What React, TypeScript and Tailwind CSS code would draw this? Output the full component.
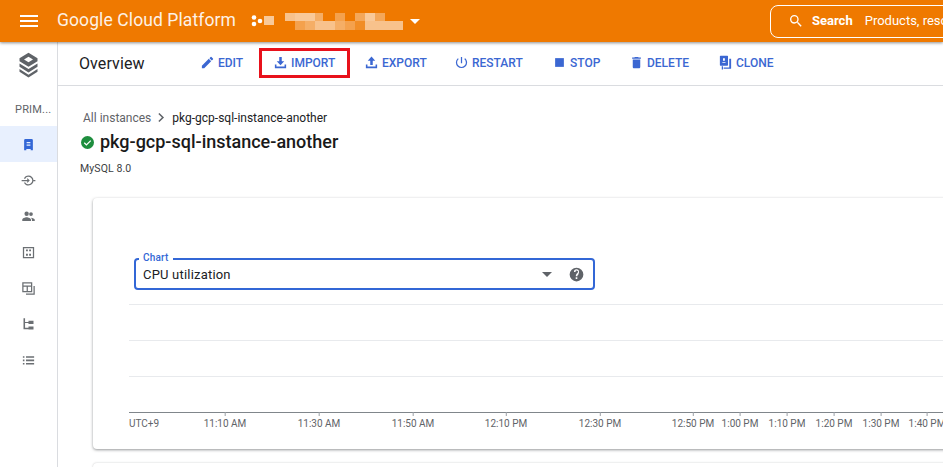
import type { ReactNode } from 'react';

const roboto = "font-['Roboto','Liberation_Sans',sans-serif]";

const Icon = ({ d, className = '' }: { d: string; className?: string }) => (
  <svg viewBox="0 0 24 24" className={className} fill="currentColor">
    <path d={d} />
  </svg>
);

const actions: { label: string; d: string; textWidth: string; gap: string; highlighted?: boolean }[] = [
  { label: 'EDIT', textWidth: 'w-[25px]', gap: 'mr-[16px]', d: 'M3 17.25V21h3.75L17.81 9.94l-3.75-3.75L3 17.25zM20.71 7.04a1 1 0 0 0 0-1.41l-2.34-2.34a1 1 0 0 0-1.41 0l-1.83 1.83 3.75 3.75 1.83-1.83z' },
  { label: 'IMPORT', textWidth: 'w-[44px]', gap: 'mr-[14px]', highlighted: true, d: 'M10 3h4v7h4l-6 6.5L6 10h4V3zM3 15h2.5v3.5h13V15H21v6H3v-6z' },
  { label: 'EXPORT', textWidth: 'w-[45px]', gap: 'mr-[27px]', d: 'M12 2.5l6 6.5h-4v7h-4V9H6l6-6.5zM3 15h2.5v3.5h13V15H21v6H3v-6z' },
  { label: 'RESTART', textWidth: 'w-[50px]', gap: 'mr-[30px]', d: 'M13 3h-2v10h2V3zm4.83 2.17l-1.42 1.42A6.92 6.92 0 0 1 19 12a7 7 0 0 1-14 0c0-2.19 1-4.14 2.58-5.42L6.17 5.17A8.93 8.93 0 0 0 3 12a9 9 0 0 0 18 0c0-2.74-1.23-5.18-3.17-6.83z' },
  { label: 'STOP', textWidth: 'w-[31px]', gap: 'mr-[28px]', d: 'M5 5h14v14H5z' },
  { label: 'DELETE', textWidth: 'w-[43px]', gap: 'mr-[28px]', d: 'M6 19c0 1.1.9 2 2 2h8c1.1 0 2-.9 2-2V7H6v12zM19 4h-3.5l-1-1h-5l-1 1H5v2h14V4z' },
  { label: 'CLONE', textWidth: 'w-[37px]', gap: '', d: 'M4 1h11a1 1 0 0 1 1 1v14a1 1 0 0 1-1 1H4a1 1 0 0 1-1-1V2a1 1 0 0 1 1-1zm4 4v4h3V5H8zm-1 6v1.5h5V11H7zm11-5h3v15a1 1 0 0 1-1 1H9v-2h9V6zM6 18h2v5H6v-5z' },
];

const sideIcons = [
  'M7 3h10a2 2 0 0 1 2 2v16h-3.5v-2h-7v2H5V5a2 2 0 0 1 2-2zm2 5v2h6V8H9zm0 4v2h6v-2H9z',
  'M12 4a8 8 0 0 1 0 16 8 8 0 0 1-7.4-5h2.2A6 6 0 1 0 6.8 9H4.6A8 8 0 0 1 12 4zM1 11h9V8l4 4-4 4v-3H1v-2zm19 0h3v2h-3v-2z',
  'M9 11a3.5 3.5 0 1 0 0-7 3.5 3.5 0 0 0 0 7zm7 0a3 3 0 1 0 0-6 3 3 0 0 0 0 6zM2 19v-2c0-2.2 4.5-4 7-4s7 1.8 7 4v2H2zm15.5 0v-2c0-1.3-.7-2.4-1.7-3.2 2.8.2 6.2 1.5 6.2 3.2v2h-4.5z',
  'M3 3h18v18H3V3zm2 2v14h14V5H5zm3 2h3v3H8V7zm5 0h3v3h-3V7zM8 14h3v3H8v-3zm5 0h3v3h-3v-3z',
  'M2 2h16v16H2V2zm2 2v3h12V4H4zm0 5v7h5V9H4zm7 0v7h5V9h-5zm9-1h2v14H8v-2h12V8z',
  'M4 2h2.5v3.5H4V2zm0 3h2.5v12H12v2.5H4V5zm2 3h6v1.5H6V8zm6-2h8v5h-8V6zm0 9h8v5h-8v-5z',
  'M3 5h2.5v2.5H3V5zm5 0h13v2.5H8V5zm-5 5.5h2.5V13H3v-2.5zm5 0h13V13H8v-2.5zM3 16h2.5v2.5H3V16zm5 0h13v2.5H8V16z',
];

const ticks = [
  { x: 96, label: '11:10 AM' },
  { x: 190, label: '11:30 AM' },
  { x: 284, label: '11:50 AM' },
  { x: 377, label: '12:10 PM' },
  { x: 471, label: '12:30 PM' },
  { x: 564, label: '12:50 PM' },
  { x: 611, label: '1:00 PM' },
  { x: 658, label: '1:10 PM' },
  { x: 705, label: '1:20 PM' },
  { x: 752, label: '1:30 PM' },
  { x: 798, label: '1:40 PM' },
];

// blurred-out project name in the header
const mosaic: [number, number, number, number, number][] = [
  [0, 0, 10, 8, 0.55], [10, 0, 20, 8, 0.6], [30, 0, 8, 8, 0.4], [50, 0, 10, 8, 0.3], [70, 0, 10, 8, 0.35], [80, 0, 10, 8, 0.6], [90, 0, 10, 8, 0.35],
  [10, 8, 10, 9, 0.3], [20, 8, 10, 9, 0.4], [30, 8, 20, 9, 0.55], [50, 8, 10, 9, 0.4], [60, 8, 10, 9, 0.3], [80, 8, 38, 9, 0.55], [70, 8, 10, 9, 0.15],
];

const Bar = ({ children }: { children: ReactNode }) => (
  <div className="relative z-10 flex h-[42px] shrink-0 items-center bg-[#ef7900] text-white shadow-[0_1px_3px_rgba(0,0,0,0.45)]">
    {children}
  </div>
);

export default function App() {
  return (
    <div className={`${roboto} flex h-[467px] w-[943px] flex-col overflow-hidden bg-white text-[#202124]`}>
      <Bar>
        <Icon d="M3 18h18v-2H3v2zm0-5h18v-2H3v2zm0-7v2h18V6H3z" className="ml-[17px] h-[24px] w-[24px] shrink-0" />
        <span className="ml-[16px] w-[173px] shrink-0 text-[17.5px] leading-none tracking-[0.1px] whitespace-nowrap opacity-90">Google Cloud Platform</span>
        <svg viewBox="0 0 24 12" className="ml-[21px] h-[12px] w-[24px] shrink-0" fill="#fff">
          <circle cx="3" cy="2.5" r="2.3" />
          <circle cx="3" cy="9" r="2.3" />
          <circle cx="9" cy="6" r="2.3" />
          <rect x="13" y="1" width="10" height="9" opacity="0.6" />
        </svg>
        <svg viewBox="0 0 118 17" className="ml-[10px] h-[17px] w-[118px] shrink-0" fill="#fff">
          {mosaic.map(([x, y, w, h, o]) => (
            <rect key={`${x}-${y}`} x={x} y={y} width={w} height={h} opacity={o} />
          ))}
        </svg>
        <span className="ml-[7px] h-0 w-0 shrink-0 border-x-[5px] border-t-[5px] border-x-transparent border-t-white" />
        <div className="ml-[350px] flex h-[33px] w-[300px] shrink-0 items-center rounded-lg border border-white pl-[17px] text-[13px] whitespace-nowrap">
          <Icon d="M15.5 14h-.79l-.28-.27A6.47 6.47 0 0 0 16 9.5 6.5 6.5 0 1 0 9.5 16c1.61 0 3.09-.59 4.23-1.57l.27.28v.79l5 4.99L20.49 19l-4.99-5zm-6 0a4.5 4.5 0 1 1 0-9 4.5 4.5 0 0 1 0 9z" className="h-[16px] w-[16px] shrink-0" />
          <span className="ml-[8px] font-bold">Search</span>
          <span className="ml-[12px]">Products, resources, docs</span>
        </div>
      </Bar>

      <div className="flex min-h-0 flex-1">
        <aside className="flex w-[58px] shrink-0 flex-col border-r border-[#dadce0]">
          <div className="flex h-[44px] shrink-0 items-center justify-center">
            <svg viewBox="0 0 24 24" className="h-[27px] w-[27px]" fill="#5f6368">
              <path d="M12 1.5l8 5v2.5l-8 5-8-5V6.5l8-5zm0 3.5L8 7.5l4 2.5 4-2.5L12 5z" />
              <path d="M4 11l8 5 8-5v3l-8 5-8-5v-3z" />
              <path d="M4 16l8 5 8-5v2.5l-8 5-8-5V16z" />
            </svg>
          </div>
          <div className="mt-[15px] h-[25px] pl-[15px] text-[11px] leading-[18px] tracking-[0.2px] whitespace-nowrap text-[#5f6368]">PRIM...</div>
          {sideIcons.map((d, i) => (
            <div key={d} className={`flex h-[36px] shrink-0 items-center justify-center ${i === 0 ? 'bg-[#e8f0fe] text-[#3367d6]' : 'text-[#6b6f73]'}`}>
              <Icon d={d} className="h-[15px] w-[15px]" />
            </div>
          ))}
        </aside>

        <main className="flex min-w-0 flex-1 flex-col">
          <div className="flex h-[44px] shrink-0 items-center border-b border-[#dadce0] pl-[21px]">
            <span className="mt-[1px] w-[121px] shrink-0 text-[16px] tracking-[0.1px] text-[#202124]">Overview</span>
            {actions.map((a) => (
              <div
                key={a.label}
                className={`-mt-[2px] flex h-[30px] shrink-0 items-center text-[12px] font-medium text-[#3b67d2] ${a.gap} ${a.highlighted ? 'w-[91px] border-[3px] border-[#e8111b] pl-[11px]' : ''}`}
              >
                <Icon d={a.d} className="mr-[3px] h-[15px] w-[15px] shrink-0" />
                <span className={`${a.textWidth} whitespace-nowrap`}>{a.label}</span>
              </div>
            ))}
          </div>

          <div className="flex min-h-0 flex-1 flex-col pl-[22px]">
            <div className="mt-[25px] ml-[3px] flex h-[14px] items-center text-[12px] leading-none">
              <span className="text-[#5f6368]">All instances</span>
              <svg viewBox="0 0 24 24" className="mx-[3px] h-[13px] w-[13px]" fill="#5f6368">
                <path d="M8 5.4L10 3.5l8.5 8.5-8.5 8.5L8 18.6l6.6-6.6z" />
              </svg>
              <span className="ml-[2px] text-[#202124]">pkg-gcp-sql-instance-another</span>
            </div>
            <div className="mt-[9px] flex h-[20px] items-center">
              <svg viewBox="0 0 24 24" className="ml-[1px] h-[13px] w-[13px]">
                <circle cx="12" cy="12" r="12" fill="#1e8e3e" />
                <path d="M6 12.5l4 4 8-8" fill="none" stroke="#fff" strokeWidth="2.4" />
              </svg>
              <h1 className="ml-[6px] text-[18px] leading-none font-medium whitespace-nowrap text-[#1a1a1a]">pkg-gcp-sql-instance-another</h1>
            </div>
            <div className="mt-[12px] h-[12px] text-[10.5px] leading-[12px] tracking-[0.1px] text-[#3c4043]">MySQL 8.0</div>

            <section className="mt-[23px] ml-[13px] h-[251px] w-[900px] shrink-0 rounded-sm bg-white pt-[60px] pl-[41px] shadow-[0_1px_3px_rgba(60,64,67,0.55)]">
              <div className="relative flex h-[32px] w-[461px] items-center rounded border-2 border-[#3367d6] pr-[9px] pl-[7px] text-[13px] tracking-[0.2px]">
                <span className="absolute -top-[8px] left-[3px] bg-white px-[4px] text-[10px] leading-[12px] font-medium text-[#3367d6]">Chart</span>
                <span className="mt-[1px] flex-1">CPU utilization</span>
                <span className="mr-[17px] h-0 w-0 border-x-[5px] border-t-[5px] border-x-transparent border-t-[#5f6368]" />
                <svg viewBox="0 0 24 24" className="h-[15px] w-[15px]" fill="#5f6368">
                  <path d="M12 1a11 11 0 1 0 0 22 11 11 0 0 0 0-22zm1.3 18h-2.6v-2.5h2.6V19zm2.6-8.3l-1.1 1.2c-.9.9-1.3 1.5-1.3 3h-2.6V14c0-1.2.5-2.3 1.3-3.1l1.6-1.6a2 2 0 1 0-3.4-1.4H7.9a4.1 4.1 0 1 1 8.2 0c0 1-.4 2-1.2 2.8z" />
                </svg>
              </div>

              <div className="-ml-[5px] mt-[14px]">
                <div className="h-[36px] border-t border-[#e8eaed]" />
                <div className="h-[36px] border-t border-[#e8eaed]" />
                <div className="relative h-[37px] border-y border-t-[#e8eaed] border-b-[#80868b]">
                  <div className="absolute -bottom-[18px] left-0 text-[10px] leading-[12px] text-[#5f6368]">UTC+9</div>
                  {ticks.map((t) => (
                    <div key={t.label} className="absolute -bottom-[18px] -translate-x-1/2 text-[10px] leading-[12px] whitespace-nowrap text-[#5f6368]" style={{ left: t.x }}>
                      <span className="absolute -top-[6px] left-1/2 h-[4px] w-px bg-[#9aa0a6]" />
                      {t.label}
                    </div>
                  ))}
                </div>
              </div>
            </section>

            <section className="mt-[14px] ml-[13px] h-[40px] w-[900px] shrink-0 rounded-sm bg-white shadow-[0_0_2px_rgba(60,64,67,0.3)]" />
          </div>
        </main>
      </div>
    </div>
  );
}
